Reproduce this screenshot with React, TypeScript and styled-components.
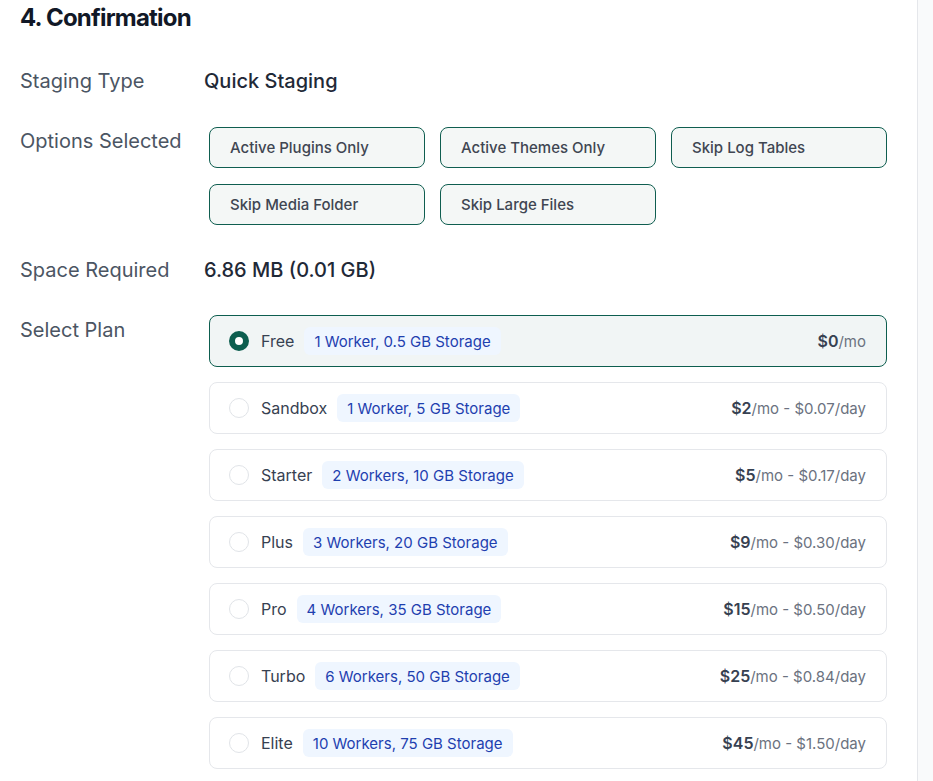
import React from 'react'
import styled, { createGlobalStyle } from 'styled-components'

const GlobalStyle = createGlobalStyle`
  html, body {
    margin: 0;
    padding: 0;
    background: #ffffff;
  }
  body {
    font-family: Inter, "Noto Sans", "Liberation Sans", sans-serif;
    -webkit-font-smoothing: antialiased;
  }
  * {
    box-sizing: border-box;
  }
`

const Layout = styled.div`
  display: flex;
  min-height: 781px;
`

const Main = styled.main`
  width: 918px;
  flex-shrink: 0;
  padding: 0 0 0 20px;
  border-right: 1px solid #e5e7eb;
`

const Aside = styled.aside`
  flex: 1;
  background: #f9fafb;
`

const Title = styled.h2`
  margin: 0 0 33px;
  font-size: 24px;
  line-height: 36px;
  font-weight: 700;
  letter-spacing: -0.8px;
  color: #111827;
`

const Summary = styled.div`
  display: grid;
  grid-template-columns: 184px 1fr;
  row-gap: 33px;
  align-items: start;
`

const Label = styled.div<{ offset?: number }>`
  font-size: 20px;
  line-height: 24px;
  color: #4b5563;
  padding-top: ${({ offset }) => offset ?? 0}px;
`

const Value = styled.div`
  font-size: 20px;
  line-height: 24px;
  font-weight: 500;
  color: #1f2937;
`

const ChipGrid = styled.div`
  margin: 1px 0 0 5px;
  display: grid;
  grid-template-columns: repeat(3, 216px);
  column-gap: 15px;
  row-gap: 16px;
`

const Chip = styled.div`
  height: 41px;
  display: flex;
  align-items: center;
  padding: 0 20px;
  border: 1px solid #0f5e50;
  border-radius: 8px;
  background: #f4f7f6;
  font-size: 15px;
  font-weight: 500;
  color: #3f4652;
`

const PlanList = styled.div`
  margin-left: 5px;
  width: 678px;
  display: flex;
  flex-direction: column;
  gap: 15px;
`

const PlanCard = styled.label<{ selected: boolean }>`
  height: 52px;
  display: flex;
  align-items: center;
  padding: 0 20px 0 19px;
  border: 1px solid ${({ selected }) => (selected ? '#0d5e4f' : '#e5e7eb')};
  border-radius: 8px;
  background: ${({ selected }) => (selected ? '#f1f5f5' : '#ffffff')};
  cursor: pointer;
`

const Radio = styled.span<{ selected: boolean }>`
  width: 20px;
  height: 20px;
  border-radius: 50%;
  flex-shrink: 0;
  background: #ffffff;
  border: ${({ selected }) =>
    selected ? '6px solid #0d5e4f' : '1px solid #e1e4e8'};
`

const PlanName = styled.span`
  margin-left: 12px;
  font-size: 16px;
  color: #374151;
`

const Badge = styled.span`
  margin-left: 10px;
  height: 28px;
  display: inline-flex;
  align-items: center;
  padding: 0 10px;
  border-radius: 6px;
  background: #eff6ff;
  color: #1e40af;
  font-size: 15px;
`

const Price = styled.span`
  margin-left: auto;
  font-size: 15px;
  color: #6b7280;
`

const Amount = styled.strong`
  font-size: 16px;
  font-weight: 600;
  color: #374151;
`

const options = [
  'Active Plugins Only',
  'Active Themes Only',
  'Skip Log Tables',
  'Skip Media Folder',
  'Skip Large Files',
]

type Plan = {
  name: string
  spec: string
  monthly: string
  daily?: string
}

const plans: Plan[] = [
  { name: 'Free', spec: '1 Worker, 0.5 GB Storage', monthly: '$0' },
  { name: 'Sandbox', spec: '1 Worker, 5 GB Storage', monthly: '$2', daily: '$0.07' },
  { name: 'Starter', spec: '2 Workers, 10 GB Storage', monthly: '$5', daily: '$0.17' },
  { name: 'Plus', spec: '3 Workers, 20 GB Storage', monthly: '$9', daily: '$0.30' },
  { name: 'Pro', spec: '4 Workers, 35 GB Storage', monthly: '$15', daily: '$0.50' },
  { name: 'Turbo', spec: '6 Workers, 50 GB Storage', monthly: '$25', daily: '$0.84' },
  { name: 'Elite', spec: '10 Workers, 75 GB Storage', monthly: '$45', daily: '$1.50' },
]

const App: React.FC = () => {
  const [plan, setPlan] = React.useState('Free')

  return (
    <>
      <GlobalStyle />
      <Layout>
        <Main>
          <Title>4. Confirmation</Title>
          <Summary>
            <Label>Staging Type</Label>
            <Value>Quick Staging</Value>

            <Label offset={3}>Options Selected</Label>
            <ChipGrid>
              {options.map((o) => (
                <Chip key={o}>{o}</Chip>
              ))}
            </ChipGrid>

            <Label>Space Required</Label>
            <Value>6.86 MB (0.01 GB)</Value>

            <Label offset={3}>Select Plan</Label>
            <PlanList>
              {plans.map((p) => (
                <PlanCard
                  key={p.name}
                  selected={plan === p.name}
                  onClick={() => setPlan(p.name)}>
                  <Radio selected={plan === p.name} />
                  <PlanName>{p.name}</PlanName>
                  <Badge>{p.spec}</Badge>
                  <Price>
                    <Amount>{p.monthly}</Amount>/mo
                    {p.daily ? ` - ${p.daily}/day` : ''}
                  </Price>
                </PlanCard>
              ))}
            </PlanList>
          </Summary>
        </Main>
        <Aside />
      </Layout>
    </>
  )
}

export default App
